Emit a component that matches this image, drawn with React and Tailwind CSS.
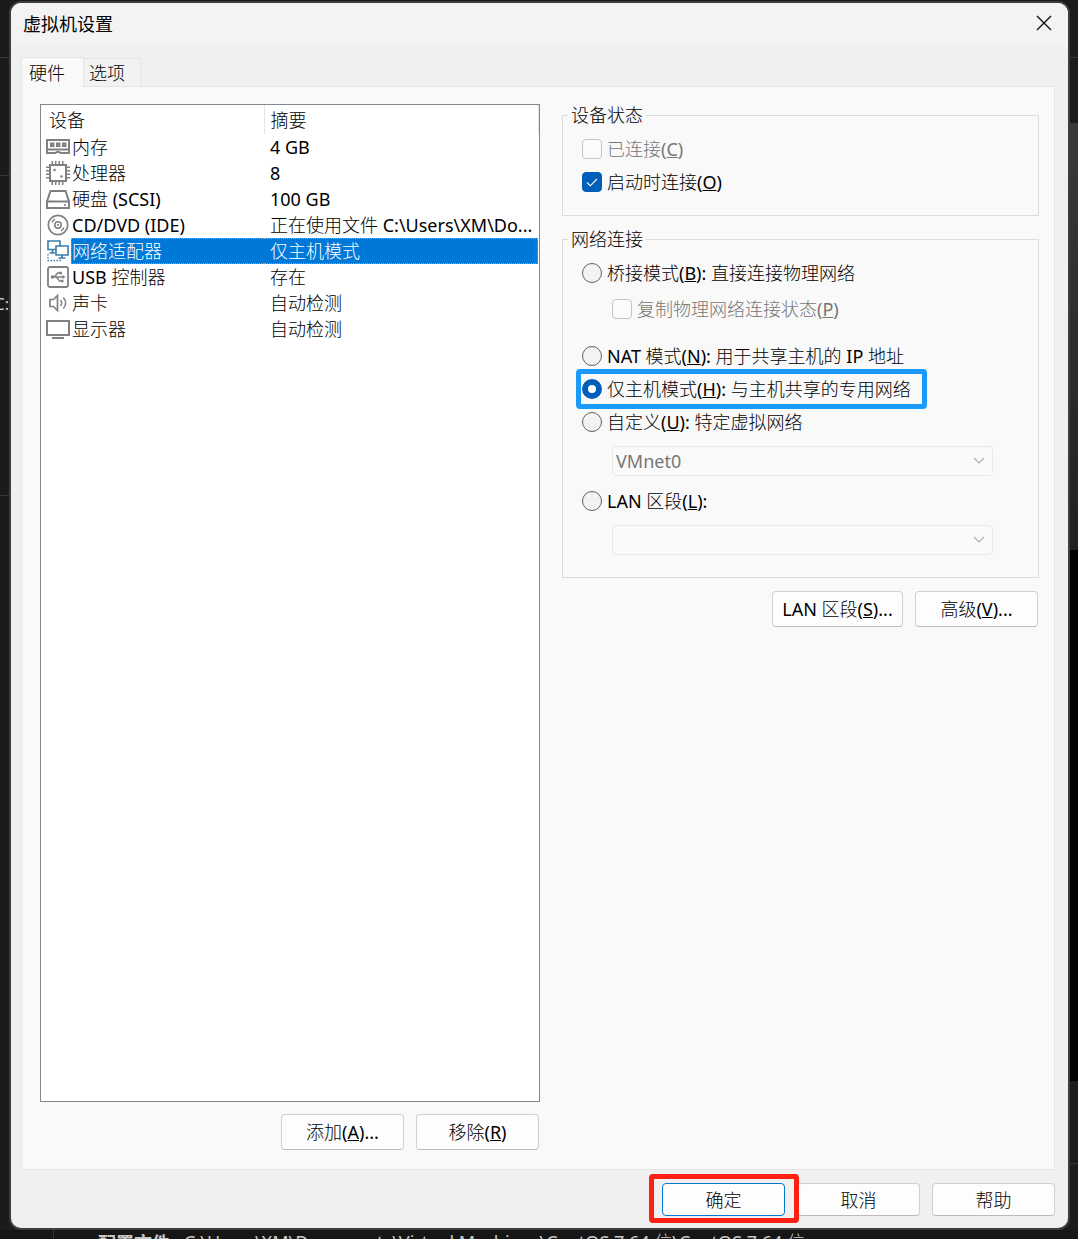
import { useState } from "react";

const stroke = { fill: "none", stroke: "#808080", strokeWidth: 2 };

function MemoryIcon() {
  return (
    <svg width="24" height="24" viewBox="0 0 24 24" aria-hidden="true">
      <path {...stroke} d="M1 5h22v9.500H1z" />
      <path {...stroke} d="M0 18h9.500l1.500-1h2l1.500 1H24M1 14v4M23 14v4" />
      <path {...stroke} d="M5 8.500h2.500v2.500H5zM11 8.500h2.500v2.500H11zM17 8.500h2.500v2.500H17z" />
    </svg>
  );
}

function CpuIcon() {
  return (
    <svg width="24" height="24" viewBox="0 0 24 24" aria-hidden="true">
      <rect x="4" y="4" width="16" height="16" {...stroke} />
      <path {...stroke} strokeWidth="3" strokeDasharray="1.500 2" d="M5.500 1.500h14M5.500 22.500h14M1.500 5.500v14M22.500 5.500v14" />
      <circle cx="8.500" cy="9" r="1.300" fill="#808080" />
      <circle cx="15.500" cy="15.500" r="1.300" fill="#808080" />
    </svg>
  );
}

function DiskIcon() {
  return (
    <svg width="24" height="24" viewBox="0 0 24 24" aria-hidden="true">
      <path {...stroke} d="M4.500 4h15L23 14.500V21H1v-6.500zM1 14.500h22" />
      <path stroke="#808080" strokeWidth="1.500" d="M18 18h2" />
    </svg>
  );
}

function DiscIcon() {
  return (
    <svg width="24" height="24" viewBox="0 0 24 24" aria-hidden="true">
      <circle cx="12" cy="12" r="9.700" {...stroke} strokeWidth="1.700" />
      <circle cx="12" cy="12" r="3.200" {...stroke} strokeWidth="1.500" />
      <circle cx="12" cy="12" r="1" fill="#808080" />
      <path {...stroke} strokeWidth="1.400" d="M6 9.500a6.500 6.500 0 0 1 3-3.300M18 14.500a6.500 6.500 0 0 1-3 3.300" />
    </svg>
  );
}

function NetworkIcon() {
  return (
    <svg width="24" height="24" viewBox="0 0 24 24" aria-hidden="true">
      <g fill="none" stroke="#3a7cab" strokeWidth="1.600">
        <path d="M10 10.500H2V2h12v5" />
        <path d="M10 7h12v9H10zM16 16v3M12.500 19h7M6.500 10.500V14M3.500 14H9" />
        <path strokeDasharray="1.500 1.500" d="M2 15v6.500h13" strokeWidth="1.300" />
      </g>
    </svg>
  );
}

function UsbIcon() {
  return (
    <svg width="24" height="24" viewBox="0 0 24 24" aria-hidden="true">
      <rect x="2" y="2" width="20" height="20" rx="2" {...stroke} strokeWidth="1.800" />
      <path {...stroke} strokeWidth="1.400" d="M6 12h12M8.500 12l3-4H14M10.500 12l3 4H16" />
      <circle cx="6.500" cy="12" r="1.800" fill="#808080" />
      <path fill="#808080" d="M16.500 10l3 2-3 2zM13.500 6.800H16v2.400h-2.500zM15 14.800h2.500v2.400H15z" />
    </svg>
  );
}

function SoundIcon() {
  return (
    <svg width="24" height="24" viewBox="0 0 24 24" aria-hidden="true">
      <path {...stroke} strokeWidth="1.700" d="M4 8.500h3.500l4-4v15l-4-4H4z" />
      <path {...stroke} strokeWidth="1.500" d="M14.500 9c1.500 2 1.500 4 0 6M17.300 6.500c3 3.500 3 7.500 0 11" />
    </svg>
  );
}

function DisplayIcon() {
  return (
    <svg width="24" height="24" viewBox="0 0 24 24" aria-hidden="true">
      <path {...stroke} d="M1 4h22v14H1z" />
      <path {...stroke} d="M6 21h12" />
    </svg>
  );
}

const devices = [
  { name: "内存", summary: "4 GB", Icon: MemoryIcon },
  { name: "处理器", summary: "8", Icon: CpuIcon },
  { name: "硬盘 (SCSI)", summary: "100 GB", Icon: DiskIcon },
  { name: "CD/DVD (IDE)", summary: "正在使用文件 C:\\Users\\XM\\Do...", Icon: DiscIcon },
  { name: "网络适配器", summary: "仅主机模式", Icon: NetworkIcon },
  { name: "USB 控制器", summary: "存在", Icon: UsbIcon },
  { name: "声卡", summary: "自动检测", Icon: SoundIcon },
  { name: "显示器", summary: "自动检测", Icon: DisplayIcon },
];

function DeviceTable() {
  const [selected, setSelected] = useState(4);
  return (
    <div className="flex-1 border border-[#828790] bg-white">
      <table className="w-full table-fixed border-collapse text-left">
        <colgroup>
          <col className="w-[30px]" />
          <col className="w-[193px]" />
          <col />
        </colgroup>
        <thead>
          <tr className="h-[29px]">
            <th colSpan={2} className="border-r border-[#e5e5e5] p-0 pl-2 font-normal">设备</th>
            <th className="border-r border-[#e5e5e5] p-0 pl-[6px] font-normal">摘要</th>
          </tr>
        </thead>
        <tbody>
          {devices.map(({ name, summary, Icon }, i) => {
            const on = i === selected;
            return (
              <tr key={name} onClick={() => setSelected(i)} className="h-[26px]">
                <td className="p-0 pl-[5px]"><Icon /></td>
                <td className="p-0">
                  <div className={on ? "h-[26px] truncate border-y border-l border-dotted border-[#ff8728] bg-[#0078d7] leading-6 text-white" : "h-[26px] truncate pl-px leading-[26px]"}>{name}</div>
                </td>
                <td className="p-0">
                  <div className={on ? "mr-px h-[26px] truncate border-y border-r border-dotted border-[#ff8728] bg-[#0078d7] pl-[6px] leading-6 text-white" : "h-[26px] whitespace-nowrap pl-[6px] leading-[26px]"}>{summary}</div>
                </td>
              </tr>
            );
          })}
        </tbody>
      </table>
    </div>
  );
}

function Check({ children, disabled, defaultChecked }) {
  return (
    <label className={disabled ? "flex h-[33px] items-center gap-[5px] text-[#767676]" : "flex h-[33px] items-center gap-[5px]"}>
      <span className="relative flex size-5 shrink-0">
        <input
          type="checkbox"
          disabled={disabled}
          defaultChecked={defaultChecked}
          className="peer size-5 appearance-none rounded border border-[#8a8a8a] bg-[#f6f6f6] checked:border-[#005fb8] checked:bg-[#005fb8] disabled:border-[#c5c5c5] disabled:bg-[#fbfbfb]"
        />
        <svg viewBox="0 0 20 20" className="pointer-events-none absolute inset-0 hidden peer-checked:block" fill="none" stroke="#fff" strokeWidth="1.100" aria-hidden="true">
          <path d="M5 10.500l3.300 3.300L15 7" />
        </svg>
      </span>
      <span>{children}</span>
    </label>
  );
}

function Radio({ children, marked, defaultChecked }) {
  return (
    <label className="relative flex h-[33px] w-fit items-center gap-[5px] whitespace-nowrap">
      <input
        type="radio"
        name="network"
        defaultChecked={defaultChecked}
        className="size-5 shrink-0 appearance-none rounded-full border border-[#616161] bg-[#f3f3f3] checked:border-6 checked:border-[#005fb8] checked:bg-white"
      />
      <span>{children}</span>
      {marked && <span className="pointer-events-none absolute -bottom-1 -left-[6px] -right-4 -top-[3px] rounded border-[5px] border-[#1a9bfc]" />}
    </label>
  );
}

function Dropdown({ label, options }) {
  return (
    <div className="relative ml-[30px] mr-[26px] mt-2">
      <select disabled aria-label={label} className="block h-[30px] w-full appearance-none rounded-sm border border-[#e8e8e8] bg-[#fafafa] pl-[3px] text-[#767676] opacity-100">
        {options.map((o) => <option key={o}>{o}</option>)}
      </select>
      <svg width="12" height="8" viewBox="0 0 12 8" className="pointer-events-none absolute right-2 top-[11px]" fill="none" stroke="#b0b0b0" strokeWidth="1.200" aria-hidden="true">
        <path d="M1 1l5 5 5-5" />
      </svg>
    </div>
  );
}

function Group({ title, className, children }) {
  return (
    <fieldset className={className}>
      <legend className="-ml-[14px] px-[3px] leading-[22px]">{title}</legend>
      {children}
    </fieldset>
  );
}

const button = "rounded border border-[#d0d0d0] border-b-[#bbbbbb] bg-[#fdfdfd] whitespace-nowrap ";

export default function App() {
  return (
    <div className="flex min-h-screen flex-col overflow-hidden bg-[#1b1b1b] pt-px font-['Noto_Sans','Noto_Sans_CJK_SC_Light','Noto_Sans_CJK_SC',sans-serif] text-lg leading-6 text-black">
      <div className="flex flex-1">
        <div className="flex w-[9px] shrink-0 flex-col text-[#d0d0d0]">
          <div className="h-[57px] border-b border-[#363636]" />
          <div className="h-[118px] border-b border-[#363636]" />
          <div className="flex h-80 items-center justify-end border-b border-[#363636]">
            <span className="mb-[64px] text-base">C:</span>
          </div>
        </div>

        <main className="flex min-w-0 flex-1 flex-col overflow-hidden rounded-xl border-2 border-[#3d3d3d] bg-[#f0f0f0]">
          <header className="flex h-[43px] shrink-0 items-center justify-between bg-[#f3f3f3] pb-[3px] pl-3 pr-4">
            <h1 className="font-['Noto_Sans_CJK_SC',sans-serif] font-normal">虚拟机设置</h1>
            <button aria-label="关闭" className="flex size-4 items-center justify-center">
              <svg width="16" height="16" viewBox="0 0 16 16" stroke="#111" strokeWidth="1.400" aria-hidden="true">
                <path d="M1 1l14 14M15 1L1 15" />
              </svg>
            </button>
          </header>

          <div className="flex flex-1 flex-col pl-[10px] pr-[13px] pt-[10px]">
            <div role="tablist" className="flex items-end">
              <button role="tab" aria-selected="true" className="relative z-10 -mb-px h-[30px] border border-b-0 border-[#e5e5e5] bg-[#f9f9f9] pl-[7px] pr-[18px]">硬件</button>
              <button role="tab" aria-selected="false" className="mt-[2px] h-7 border border-b-0 border-l-0 border-[#e5e5e5] bg-[#f2f2f2] pl-[5px] pr-[15px]">选项</button>
            </div>

            <div role="tabpanel" className="flex flex-1 gap-[22px] border border-[#e5e5e5] bg-[#f9f9f9] pb-[19px] pl-[18px] pr-[15px] pt-[17px]">
              <section className="flex w-[500px] shrink-0 flex-col">
                <DeviceTable />
                <div className="mt-3 flex justify-end gap-3 pr-px">
                  <button className={button + "h-9 w-[123px]"}>添加(<u>A</u>)...</button>
                  <button className={button + "h-9 w-[123px]"}>移除(<u>R</u>)</button>
                </div>
              </section>

              <section className="flex min-w-0 flex-1 flex-col">
                <Group title="设备状态" className="border border-[#dcdcdc] px-[19px] pb-[17px] pt-[6px]">
                  <Check disabled>已连接(<u>C</u>)</Check>
                  <Check defaultChecked>启动时连接(<u>O</u>)</Check>
                </Group>

                <Group title="网络连接" className="mt-3 border border-[#dcdcdc] px-[19px] pb-[22px] pt-[6px]">
                  <Radio>桥接模式(<u>B</u>): 直接连接物理网络</Radio>
                  <div className="mb-[14px] ml-[30px] mt-[3px]">
                    <Check disabled>复制物理网络连接状态(<u>P</u>)</Check>
                  </div>
                  <Radio>NAT 模式(<u>N</u>): 用于共享主机的 IP 地址</Radio>
                  <Radio marked defaultChecked>仅主机模式(<u>H</u>): 与主机共享的专用网络</Radio>
                  <Radio>自定义(<u>U</u>): 特定虚拟网络</Radio>
                  <Dropdown label="虚拟网络" options={["VMnet0"]} />
                  <div className="mt-2">
                    <Radio>LAN 区段(<u>L</u>):</Radio>
                  </div>
                  <Dropdown label="LAN 区段" options={[""]} />
                </Group>

                <div className="mt-[13px] flex justify-end gap-3 pr-px">
                  <button className={button + "h-9 w-[131px]"}>LAN 区段(<u>S</u>)...</button>
                  <button className={button + "h-9 w-[123px]"}>高级(<u>V</u>)...</button>
                </div>
              </section>
            </div>
          </div>

          <footer className="flex justify-end gap-3 pb-3 pr-[13px] pt-[13px]">
            <div className="relative z-10">
              <button className="h-[33px] w-[123px] rounded border border-[#0078d4] bg-[#fdfdfd]">确定</button>
              <span className="pointer-events-none absolute -left-[13px] -right-[14px] -top-[9px] -bottom-[7px] rounded border-[5px] border-[#ff2014]" />
            </div>
            <button className={button + "h-[33px] w-[123px]"}>取消</button>
            <button className={button + "h-[33px] w-[123px]"}>帮助</button>
          </footer>
        </main>

        <div className="flex w-2 shrink-0 flex-col">
          <div className="h-[57px] border-b border-[#363636]" />
          <div className="mt-[65px] h-[427px] bg-linear-to-b from-[#3a3a3a] to-[#222222]" />
          <div className="h-[531px] bg-black" />
          <div className="h-[83px] border-b border-[#363636]" />
        </div>
      </div>

      <div className="flex h-[9px] shrink-0 gap-[14px] overflow-hidden whitespace-nowrap bg-[#161616] text-[#c8c8c8]">
        <div className="w-[54px] shrink-0 border-r border-[#363636]" />
        <b className="ml-[30px] font-['Noto_Sans_CJK_SC',sans-serif] font-bold">配置文件</b>
        <span>C:\Users\XM\Documents\Virtual Machines\CentOS 7 64 位\CentOS 7 64 位</span>
      </div>
    </div>
  );
}
